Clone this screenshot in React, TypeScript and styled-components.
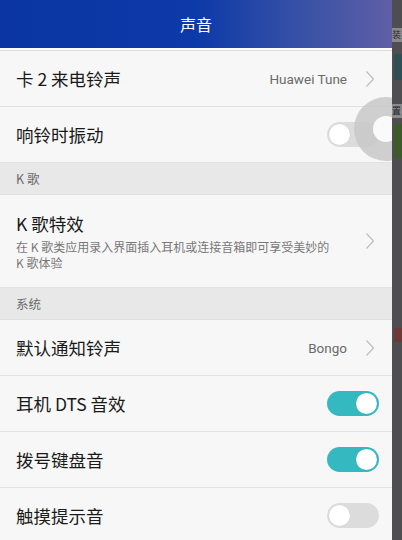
import React from 'react';
import styled, { createGlobalStyle } from 'styled-components';

const GlobalStyle = createGlobalStyle`
  html, body { margin: 0; padding: 0; background: #4b4b4d; }
  body { font-family: "Noto Sans CJK SC", "Noto Sans", sans-serif; }
`;

interface RowData {
  title: string;
  desc?: string;
  value?: string;
  arrow?: boolean;
  toggle?: boolean;
  on?: boolean;
}

const Screen = styled.div`
  display: flex; width: 402px; height: 540px; overflow: hidden;
`;

const Panel = styled.div`
  position: relative; width: 392px; height: 540px; overflow: hidden; background: #f7f7f7;
  display: flex; flex-direction: column;
`;

const Header = styled.div`
  height: 48px; flex-shrink: 0; display: flex; align-items: center; justify-content: center;
  background: linear-gradient(90deg, #0a35a3 0%, #0c3aa8 50%, #3a52a6 78%, #5f5fa6 100%);
  color: #fff; font-size: 16px; border-bottom: 2px solid #fdfdfd;
  box-shadow: 0 1px 0 #dcdcdc; margin-bottom: 1px;
`;

const Row = styled.div<{ $tall?: boolean }>`
  display: flex; align-items: center; flex-shrink: 0;
  height: ${p => (p.$tall ? '92px' : '55px')};
  padding: 0 13px 0 16px; border-bottom: 1px solid #e2e2e2; background: #f7f7f7;
`;

const Texts = styled.div`
  flex: 1; min-width: 0; display: flex; flex-direction: column;
`;

const Title = styled.div`
  font-size: 17.5px; color: #1a1a1a; line-height: 24px;
`;

const Desc = styled.div`
  font-size: 12px; color: #777; line-height: 16px; margin-top: 3px; max-width: 318px;
`;

const Value = styled.span`
  font-family: "Roboto", "Noto Sans", sans-serif; font-size: 13.5px; color: #6a6a6a; margin-right: 18px;
`;

const Section = styled.div`
  height: 31px; flex-shrink: 0; display: flex; align-items: center; padding-left: 16px;
  background: #e8e8e8; color: #6a6a6a; font-size: 12.5px; border-bottom: 1px solid #e0e0e0;
`;

const Track = styled.div<{ $on?: boolean }>`
  width: 52px; height: 25px; border-radius: 13px; box-sizing: border-box; padding: 2px;
  display: flex; justify-content: ${p => (p.$on ? 'flex-end' : 'flex-start')};
  background: ${p => (p.$on ? '#35b9c1' : '#dcdcdc')};
`;

const Knob = styled.div`
  width: 21px; height: 21px; border-radius: 50%; background: #fff;
  box-shadow: 0 0 1px rgba(0,0,0,0.15);
`;

const Float = styled.div`
  position: absolute; left: 354px; top: 97px; width: 64px; height: 64px; border-radius: 50%;
  background: rgba(200, 200, 200, 0.85); display: flex; align-items: center; justify-content: center;
`;

const FloatInner = styled.div`
  width: 26px; height: 26px; border-radius: 50%; background: #fafafa;
`;

const Strip = styled.div`
  flex: 1; background: #4e4e50; display: flex; flex-direction: column; padding-top: 28px;
`;

const StripBit = styled.div<{ $c: string; $h: number; $mt: number }>`
  height: ${p => p.$h}px; margin-top: ${p => p.$mt}px; background: ${p => p.$c}; margin-left: 2px;
`;

const StripText = styled.div<{ $mt: number }>`
  margin-top: ${p => p.$mt}px; color: #222; font-size: 9px; line-height: 14px;
  background: #8a8a8c; overflow: hidden; white-space: nowrap;
`;

const ChevronWrap = styled.span`
  display: flex; margin-right: 4px;
`;

const Chevron = () => (
  <ChevronWrap>
    <svg width="10" height="18" viewBox="0 0 10 18" fill="none">
      <path d="M1.5 1.5 L8.5 9 L1.5 16.5" stroke="#bdbdbd" strokeWidth="1.2" />
    </svg>
  </ChevronWrap>
);

const SettingRow = ({ title, desc, value, arrow, toggle, on }: RowData) => (
  <Row $tall={!!desc}>
    <Texts>
      <Title>{title}</Title>
      {desc && <Desc>{desc}</Desc>}
    </Texts>
    {value && <Value>{value}</Value>}
    {arrow && <Chevron />}
    {toggle && (
      <Track $on={on}>
        <Knob />
      </Track>
    )}
  </Row>
);

export default function App() {
  return (
    <Screen>
      <GlobalStyle />
      <Panel>
        <Header>声音</Header>
        <SettingRow title="卡 2 来电铃声" value="Huawei Tune" arrow />
        <SettingRow title="响铃时振动" toggle />
        <Section>K 歌</Section>
        <SettingRow title="K 歌特效" desc="在 K 歌类应用录入界面插入耳机或连接音箱即可享受美妙的 K 歌体验" arrow />
        <Section>系统</Section>
        <SettingRow title="默认通知铃声" value="Bongo" arrow />
        <SettingRow title="耳机 DTS 音效" toggle on />
        <SettingRow title="拨号键盘音" toggle on />
        <SettingRow title="触摸提示音" toggle />
        <Float>
          <FloatInner />
        </Float>
      </Panel>
      <Strip>
        <StripText $mt={0}>装</StripText>
        <StripBit $c="#2f4f55" $h={26} $mt={12} />
        <StripText $mt={24}>置</StripText>
        <StripBit $c="#3d5a2a" $h={34} $mt={6} />
        <StripBit $c="#6b3a36" $h={14} $mt={170} />
      </Strip>
    </Screen>
  );
}
